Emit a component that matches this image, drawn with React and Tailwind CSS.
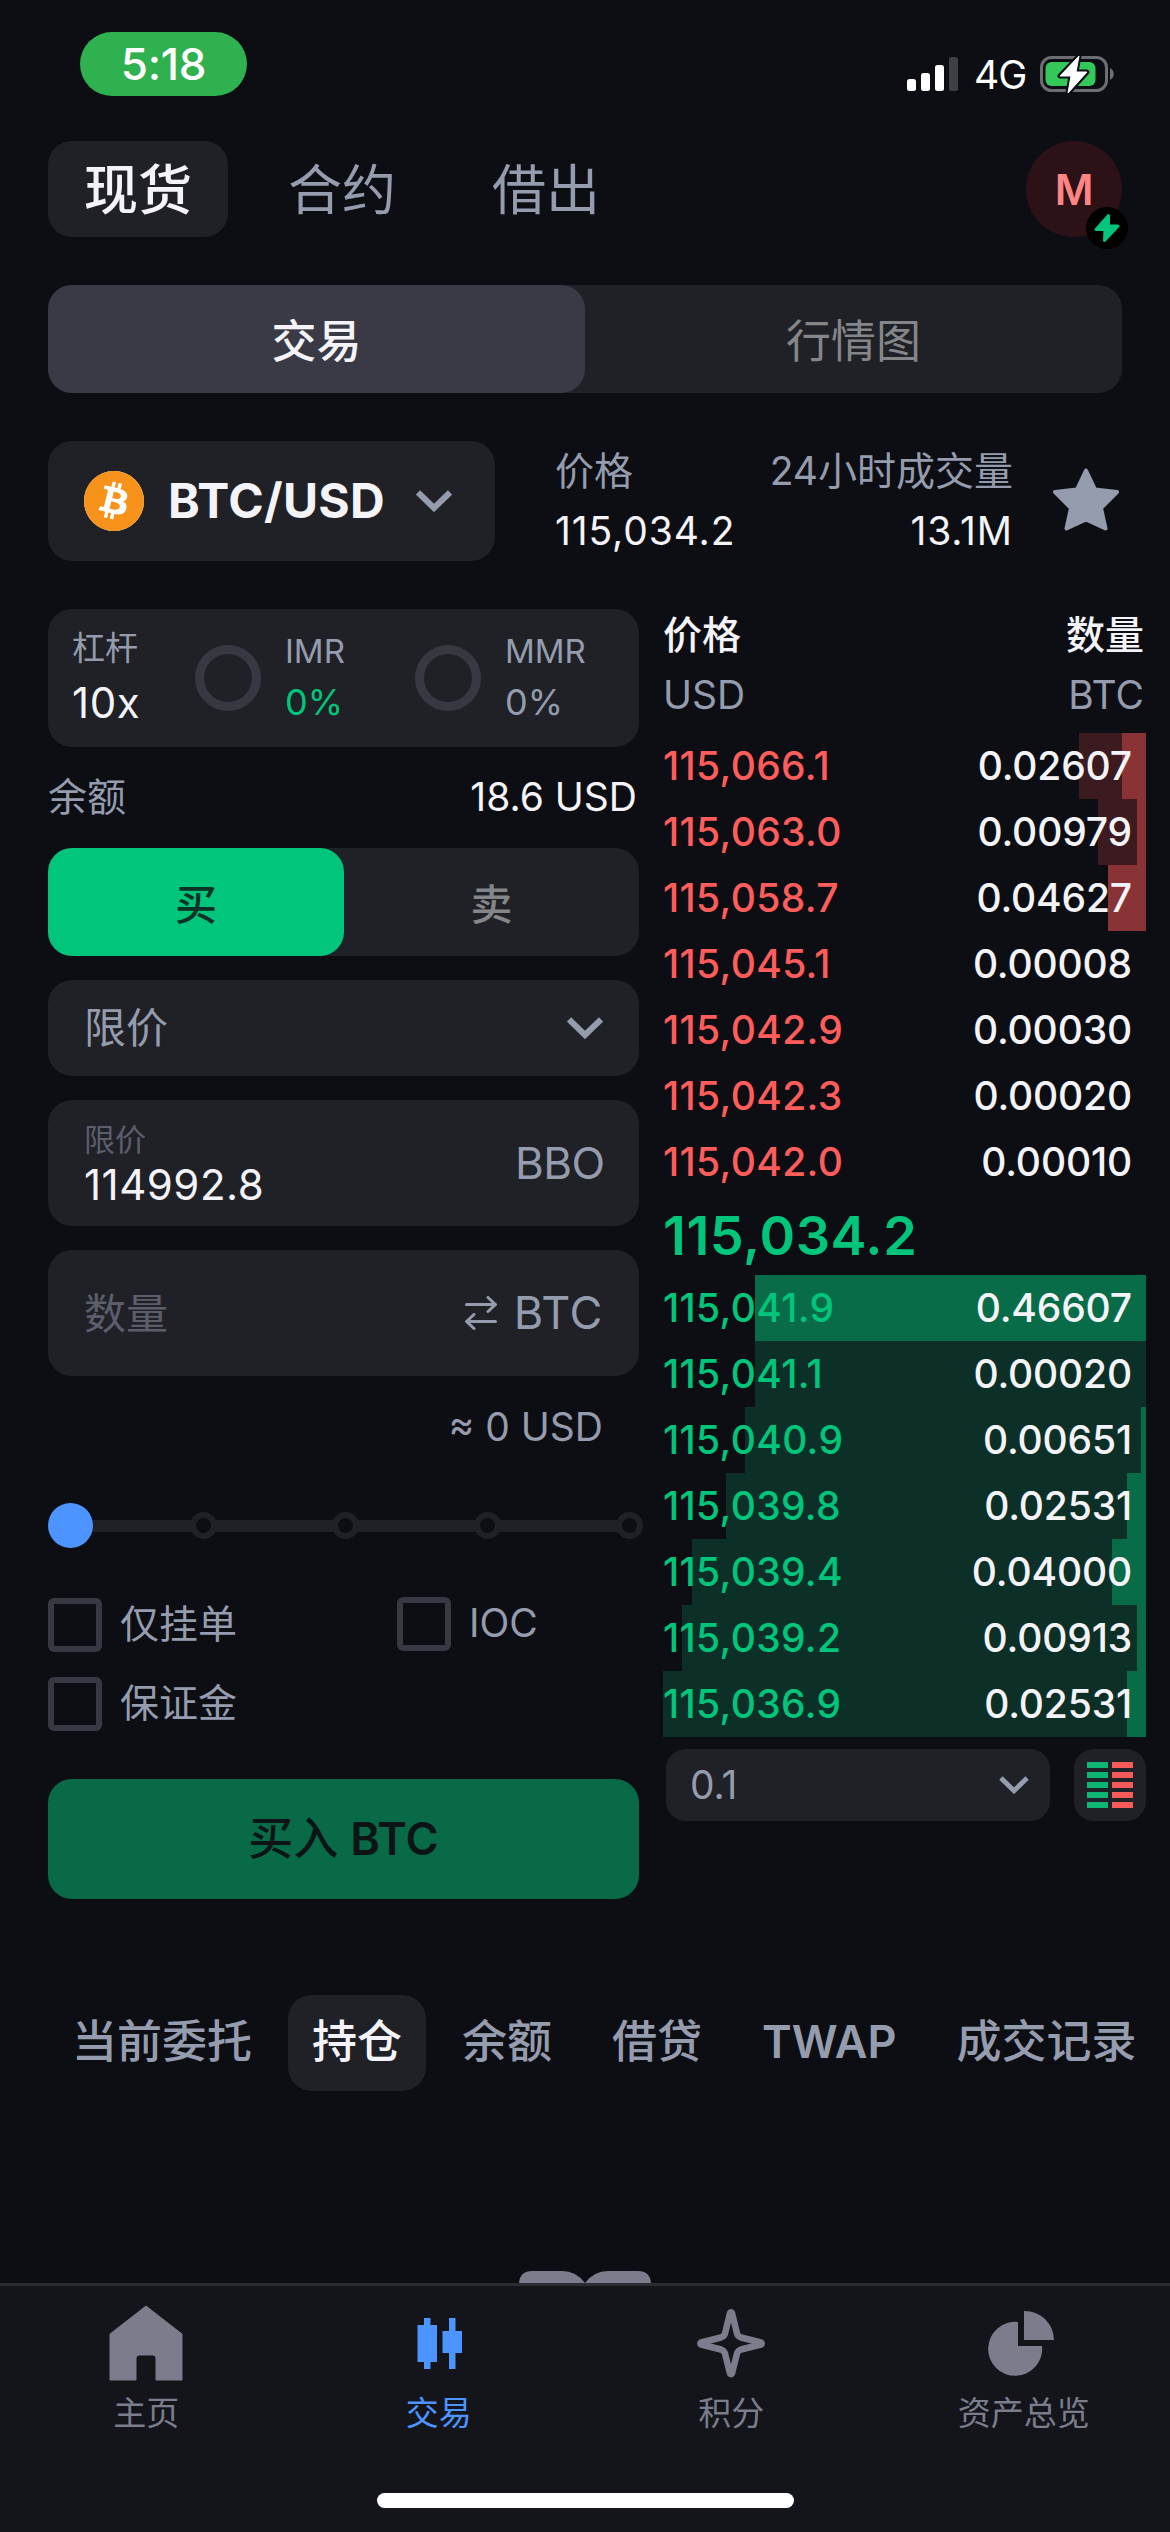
import React, { useState } from 'react';
import { SiBitcoin } from 'react-icons/si';

const asks = [
  { price: '115,066.1', size: '0.02607', total: 67, depth: 24 },
  { price: '115,063.0', size: '0.00979', total: 48, depth: 9 },
  { price: '115,058.7', size: '0.04627', total: 38, depth: 38 },
  { price: '115,045.1', size: '0.00008', total: 0, depth: 0 },
  { price: '115,042.9', size: '0.00030', total: 0, depth: 0 },
  { price: '115,042.3', size: '0.00020', total: 0, depth: 0 },
  { price: '115,042.0', size: '0.00010', total: 0, depth: 0 },
];

const bids = [
  { price: '115,041.9', size: '0.46607', total: 391, depth: 391 },
  { price: '115,041.1', size: '0.00020', total: 391, depth: 0 },
  { price: '115,040.9', size: '0.00651', total: 401, depth: 5 },
  { price: '115,039.8', size: '0.02531', total: 420, depth: 19 },
  { price: '115,039.4', size: '0.04000', total: 454, depth: 34 },
  { price: '115,039.2', size: '0.00913', total: 464, depth: 9 },
  { price: '115,036.9', size: '0.02531', total: 483, depth: 19 },
];

const Chevron = ({ className }) => (
  <svg viewBox="0 0 36 22" className={className} fill="none" stroke="#949cae" strokeWidth="6">
    <path d="M2 2.5 18 18 34 2.5" />
  </svg>
);

const StatusBar = () => (
  <div className="flex h-[141px] items-start justify-between pl-20 pr-[55px]">
    <div className="mt-8 flex h-16 w-[167px] items-center justify-center rounded-full bg-[#2fb14f] text-[44px] font-medium tracking-[-0.3px] text-white">
      5:18
    </div>
    <div className="mt-[55px] flex items-center">
      <svg viewBox="0 0 52 36" className="h-9 w-[52px]" fill="#fff">
        <rect x="0" y="22" width="9" height="12" rx="2.5" />
        <rect x="14" y="16" width="9" height="18" rx="2.5" />
        <rect x="28" y="8" width="9" height="26" rx="2.5" />
        <rect x="42" y="0" width="9" height="34" rx="2.5" fill="#3f4045" />
      </svg>
      <span className="ml-[15px] w-[51px] text-[39px] leading-9 tracking-[-1px] text-white">4G</span>
      <svg viewBox="-1 1 76 40" className="ml-[14px] h-10 w-[76px]">
        <rect x="1.5" y="3.5" width="65" height="33" rx="10" fill="none" stroke="#6d6e73" strokeWidth="3" />
        <path d="M70 14c5 2.500 5 9.500 0 12z" fill="#6d6e73" />
        <rect x="5.500" y="8" width="50" height="24" rx="6" fill="#34c759" />
        <path d="M39 2 20 22h11l-3 17 19-21H36z" fill="#fff" stroke="#0d0e13" strokeWidth="5" strokeLinejoin="round" />
        <path d="M39 2 20 22h11l-3 17 19-21H36z" fill="#fff" stroke="#fff" strokeWidth="1" strokeLinejoin="round" />
      </svg>
    </div>
  </div>
);

const TopTabs = () => {
  const [active, setActive] = useState('现货');
  return (
    <div className="flex h-24 items-center justify-between px-12">
      <div className="flex gap-6">
        {['现货', '合约', '借出'].map((tab) => (
          <button
            key={tab}
            onClick={() => setActive(tab)}
            className={`h-24 rounded-3xl px-9 pt-[3px] text-[54px] leading-none ${active === tab ? 'bg-[#202126] font-medium text-[#f4f4f8]' : 'text-[#949cae]'}`}
          >
            {tab}
          </button>
        ))}
      </div>
      <div className="relative flex size-24 items-center justify-center rounded-full bg-[#2c1216] text-[42px] font-semibold text-[#ff8585]">
        M
        <div className="absolute -bottom-3 -right-1.5 flex size-[42px] items-center justify-center rounded-full bg-black">
          <svg viewBox="0 0 26 28" className="h-7 w-[26px]" fill="#00c57b" stroke="#00c57b" strokeWidth="3" strokeLinejoin="round">
            <path d="M14.500 1.500 2 15.500h9L10.500 26.500 24 12h-9.500z" />
          </svg>
        </div>
      </div>
    </div>
  );
};

const MarketHeader = () => (
  <div className="mt-12 flex h-[120px] items-center px-12">
    <div className="flex h-[120px] w-[447px] items-center rounded-3xl bg-[#202126] pl-9">
      <span className="flex size-[60px] rounded-full bg-white">
        <SiBitcoin className="size-[60px] text-[#f7931a]" />
      </span>
      <span className="ml-6 w-[222px] whitespace-nowrap text-[48px] font-bold leading-none tracking-[0.3px] text-[#f4f4f8]">BTC/USD</span>
      <Chevron className="ml-[26px] h-[22px] w-9" />
    </div>
    <div className="ml-[60px] flex w-[458px] justify-between text-[39px] leading-[60px]">
      <div>
        <div className="text-[#949cae]">价格</div>
        <div className="tracking-[0.9px] text-[#f4f4f8]">115,034.2</div>
      </div>
      <div className="text-right">
        <div className="text-[#949cae]">24小时成交量</div>
        <div className="tracking-[0.9px] text-[#f4f4f8]">13.1M</div>
      </div>
    </div>
    <svg viewBox="0 0 66 63" className="-mt-[3px] ml-10 h-[63px] w-[66px]" fill="#949cae" stroke="#949cae" strokeWidth="4" strokeLinejoin="round">
      <path d="M33 2.500 42 21.500 64 24 48 40 52.500 60.500 33 51.500 13.500 60.500 18 40 2 24 24 21.500z" />
    </svg>
  </div>
);

const Gauge = ({ label, value, valueClass }) => (
  <div className="flex items-center">
    <div className="size-[66px] rounded-full border-[9px] border-[#373842]" />
    <div className="-mt-[3px] ml-6">
      <div className="text-[33px] leading-[51px] text-[#949cae]">{label}</div>
      <div className={`text-[36px] leading-[51px] ${valueClass}`}>{value}</div>
    </div>
  </div>
);

const Checkbox = ({ label, className }) => (
  <label className={`flex h-[54px] items-center gap-[18px] text-[39px] leading-none text-[#949cae] ${className || ''}`}>
    <span className="size-[54px] rounded-md border-[6px] border-[#373842]" />
    <span className="pb-[3px]">{label}</span>
  </label>
);

const OrderForm = () => (
  <div className="flex w-[591px] flex-col">
    <div className="flex h-[138px] items-center rounded-3xl bg-[#202126] pl-6">
      <div className="-mt-[3px] w-[123px]">
        <div className="text-[33px] leading-[51px] text-[#949cae]">杠杆</div>
        <div className="text-[42px] leading-[57px] tracking-[0.6px] text-[#f4f4f8]">10x</div>
      </div>
      <div className="w-[220px]">
        <Gauge label="IMR" value="0%" valueClass="text-[#00c57b]" />
      </div>
      <Gauge label="MMR" value="0%" valueClass="text-[#949cae]" />
    </div>

    <div className="flex h-[101px] items-center justify-between text-[39px]">
      <span className="text-[#949cae]">余额</span>
      <span className="pr-0.5 text-[#f4f4f8]">18.6 USD</span>
    </div>

    <div className="flex h-[108px] rounded-3xl bg-[#202126] text-[42px] font-medium">
      <button className="w-[296px] rounded-3xl bg-[#00c57b] pt-1 text-[#0c3226]">买</button>
      <button className="flex-1 pt-1 text-[#858689]">卖</button>
    </div>

    <div className="mt-6 flex h-24 items-center justify-between rounded-3xl bg-[#202126] px-9 text-[42px] text-[#949cae]">
      <span className="pb-0.5">限价</span>
      <Chevron className="h-[22px] w-9" />
    </div>

    <div className="mt-6 flex h-[126px] items-center justify-between rounded-3xl bg-[#202126] px-9">
      <div className="pt-px">
        <div className="text-[31px] leading-[42px] text-[#5c5e6b]">限价</div>
        <div className="text-[42px] leading-[48px] tracking-[0.5px] text-[#f4f4f8]">114992.8</div>
      </div>
      <div className="w-[88px] overflow-hidden whitespace-nowrap text-[44px] tracking-[-0.5px] text-[#949cae]">BBO</div>
    </div>

    <div className="mt-6 flex h-[126px] items-center justify-between rounded-3xl bg-[#202126] px-9 text-[42px]">
      <span className="text-[#5c5e6b]">数量</span>
      <span className="flex items-center gap-[17px] text-[45px] tracking-[0.6px] text-[#949cae]">
        <svg viewBox="0 0 32 34" className="h-[34px] w-8" fill="none" stroke="#949cae" strokeWidth="3" strokeLinecap="round" strokeLinejoin="round">
          <path d="M1.500 8.500h29M23 1.500l7.500 7-7.500 7M30.500 25.500h-29M9 18.500l-7.500 7 7.500 7" />
        </svg>
        BTC
      </span>
    </div>

    <div className="flex h-[102px] items-center justify-end pr-9 text-[39px] text-[#949cae]">≈ 0 USD</div>

    {/* amount slider */}
    <div className="relative mt-[25px] flex h-[45px] items-center">
      <div className="h-3 w-full rounded-full bg-[#202126]" />
      <div className="absolute left-0 size-[45px] rounded-full bg-[#4c94ff]" />
      <div className="absolute left-[142px] flex w-[453px] justify-between">
        {[25, 50, 75, 100].map((step) => (
          <span key={step} className="size-[27px] rounded-full border-[6px] border-[#202126] bg-[#0d0e13]" />
        ))}
      </div>
    </div>

    <div className="mt-[50px] grid grid-cols-[349px_auto] gap-y-[25px]">
      <Checkbox label="仅挂单" />
      <Checkbox label="IOC" className="-mt-px" />
      <Checkbox label="保证金" />
    </div>

    <button className="mt-12 h-[120px] rounded-3xl bg-[#086a46] text-[45px] font-medium text-[#0c1416]">
      买入 <span className="font-semibold">BTC</span>
    </button>
  </div>
);

const BookRow = ({ row, side }) => {
  const isAsk = side === 'ask';
  return (
    <div className="relative flex h-[66px] items-center justify-between pr-[14px] text-[39px]">
      <div className={`absolute inset-y-0 right-0 ${isAsk ? 'bg-[#3c1b20]' : 'bg-[#0c3027]'}`} style={{ width: row.total }} />
      <div className={`absolute inset-y-0 right-0 ${isAsk ? 'bg-[#8a3336]' : 'bg-[#076c47]'}`} style={{ width: row.depth }} />
      <span className={`relative tracking-[0.35px] ${isAsk ? 'text-[#ff5c5c]' : 'text-[#00c57b]'}`}>{row.price}</span>
      <span className="relative tracking-[-0.15px] text-[#f4f4f8]">{row.size}</span>
    </div>
  );
};

const OrderBook = () => (
  <div className="ml-6 w-[483px] font-medium">
    <div className="flex h-[124px] flex-col text-[39px]">
      <div className="flex h-[53px] items-center justify-between pr-0.5 text-[#f4f4f8]">
        <span>价格</span>
        <span>数量</span>
      </div>
      <div className="mt-[5px] flex h-[57px] items-center justify-between pr-0.5 font-normal text-[#949cae]">
        <span>USD</span>
        <span>BTC</span>
      </div>
    </div>
    {asks.map((row) => <BookRow key={row.price} row={row} side="ask" />)}
    <div className="flex h-20 items-center text-[54px] font-semibold tracking-[0.6px] text-[#00c57b]">115,034.2</div>
    {bids.map((row) => <BookRow key={row.price} row={row} side="bid" />)}
    <div className="mt-3 flex h-[72px] justify-between pl-[3px]">
      <div className="flex w-96 items-center justify-between rounded-[20px] bg-[#202126] pl-6 pr-[21px] text-[39px] font-normal text-[#949cae]">
        0.1
        <Chevron className="h-[18px] w-[30px]" />
      </div>
      <div className="grid size-[72px] grid-cols-[21px_21px] content-center justify-center gap-1 rounded-[20px] bg-[#202126]">
        {[0, 1, 2, 3, 4].map((i) => (
          <React.Fragment key={i}>
            <span className="h-1.5 bg-[#0fb573]" />
            <span className="h-1.5 bg-[#f55a5b]" />
          </React.Fragment>
        ))}
      </div>
    </div>
  </div>
);

const AccountTabs = () => {
  const [active, setActive] = useState('持仓');
  return (
    <div className="mt-24 flex h-24 gap-3 overflow-hidden pl-12">
      {['当前委托', '持仓', '余额', '借贷', 'TWAP', '成交记录'].map((tab) => (
        <button
          key={tab}
          onClick={() => setActive(tab)}
          className={`shrink-0 rounded-3xl px-6 pb-[3px] text-[45px] leading-none ${tab === 'TWAP' ? 'font-semibold' : 'font-medium'} ${active === tab ? 'bg-[#202126] text-[#f4f4f8]' : 'text-[#949cae]'}`}
        >
          {tab}
        </button>
      ))}
    </div>
  );
};

const navItems = [
  {
    label: '主页',
    icon: <path d="M36 0 72 28v46H46V52q0-3-3-3H29q-3 0-3 3v22H0V28z" stroke="currentColor" strokeWidth="1" />,
  },
  {
    label: '交易',
    active: true,
    icon: <path d="M21 12h6.500v7H34v37h-6.500v7H21v-7h-6.500V19H21zM46 12h6.500v13H59v22h-6.500v16H46V47h-6.500V25H46z" />,
  },
  {
    label: '积分',
    icon: (
      <path
        d="M35 7q1-1.500 2 0L42 27.500Q43 30.500 46 31.500L66 36.500q1.500 1 0 2L46 43.500Q43 44.500 42 47.500L37 67.500q-1 1.500-2 0L30 47.500Q29 44.500 26 43.500L6 38.500q-1.500-1 0-2L26 31.500Q29 30.500 30 27.500z"
        fill="none"
        stroke="currentColor"
        strokeWidth="6.5"
        strokeLinejoin="round"
      />
    ),
  },
  {
    label: '资产总览',
    icon: <path d="M30 16v24h24a27 27 0 1 1-24-24zM36 5a29 29 0 0 1 30 29H36z" />,
  },
];

const BottomNav = () => (
  <div className="flex h-[249px] flex-col border-t-[3px] border-[#2b2c32] bg-[#14151a]">
    <div className="grid h-[207px] grid-cols-4">
      {navItems.map((item) => (
        <div key={item.label} className={`flex flex-col items-center pt-5 ${item.active ? 'text-[#4c94ff]' : 'text-[#7b7d8d]'}`}>
          <svg viewBox="0 0 72 75" className="h-[75px] w-[72px] overflow-visible" fill="currentColor">
            {item.icon}
          </svg>
          <span className="mt-2.5 text-[33px] leading-[44px]">{item.label}</span>
        </div>
      ))}
    </div>
    <div className="mx-auto h-[15px] w-[417px] rounded-full bg-white" />
  </div>
);

export default function App() {
  return (
    <div className="flex h-[2532px] w-[1170px] flex-col overflow-hidden bg-[#0d0e13] font-['Inter','Noto_Sans_CJK_SC',sans-serif]">
      <StatusBar />
      <TopTabs />
      <div className="mx-12 mt-12 flex h-[108px] shrink-0 rounded-3xl bg-[#202126] text-[45px]">
        <button className="w-1/2 rounded-3xl bg-[#393a46] pt-1.5 font-medium text-[#f4f4f8]">交易</button>
        <button className="w-1/2 pt-1.5 text-[#858689]">行情图</button>
      </div>
      <MarketHeader />
      <div className="mt-12 flex pl-12">
        <OrderForm />
        <OrderBook />
      </div>
      <AccountTabs />
      {/* top edge of the empty state illustration, cut off by the nav */}
      <div className="flex flex-1 items-end justify-center">
        <svg viewBox="0 0 132 12" className="h-3 w-[132px]" fill="#7b7d8d">
          <path d="M0 12Q1 0 13 0H43Q57 0 66 12Q75 0 89 0H119Q131 0 132 12z" />
        </svg>
      </div>
      <BottomNav />
    </div>
  );
}
